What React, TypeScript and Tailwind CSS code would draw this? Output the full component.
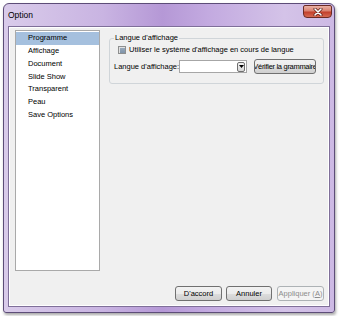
const items = ["Programme", "Affichage", "Document", "Slide Show", "Transparent", "Peau", "Save Options"];

function CloseButton() {
  return (
    <div className="mt-[1px] mr-[2px] w-[29px] h-[13px] rounded-b-[4px] rounded-t-[2px] border border-[#6a2b24] bg-[linear-gradient(to_bottom,#eab1a5,#d9806e_45%,#c2402c_55%,#d66a52)] flex items-center justify-center">
      <svg width="10" height="8" viewBox="0 0 10 8">
        <path d="M2 1 L8 7 M8 1 L2 7" stroke="#5a1d16" strokeWidth="3" strokeLinecap="round" />
        <path d="M2 1 L8 7 M8 1 L2 7" stroke="#ffffff" strokeWidth="1.6" strokeLinecap="round" />
      </svg>
    </div>
  );
}

function Button({ label, w, disabled }: { label: React.ReactNode; w: string; disabled?: boolean }) {
  return (
    <div
      className={
        disabled
          ? `${w} h-[15px] rounded-[3px] border border-[#adb2b5] bg-[#f4f4f4] text-[#8c8c8c] flex items-center justify-center whitespace-nowrap overflow-hidden`
          : `${w} h-[15px] rounded-[3px] border border-[#707070] bg-[linear-gradient(to_bottom,#f2f2f2,#ebebeb_50%,#dddddd_51%,#cfcfcf)] text-black flex items-center justify-center whitespace-nowrap overflow-hidden`
      }
    >
      {label}
    </div>
  );
}

export default function App() {
  return (
    <div className="w-[340px] h-[316px] bg-white pl-[3px] pt-[3px] font-['Liberation_Sans',Arial,sans-serif] text-[7.5px] leading-[10px] text-black">
      <div className="w-[332px] h-[310px] rounded-t-[6px] rounded-b-[3px] border border-[#5d4d78] bg-[linear-gradient(to_right,#d9cbea,#c9b4e2_30%,#b598d6_48%,#c3aae0_62%,#d4c3e8_85%,#cdb9e4)] shadow-[1px_2px_3px_rgba(0,0,0,0.35)] flex flex-col">
        <div className="h-[22px] flex items-start justify-between">
          <span className="pl-[4px] pt-[6px] text-[8.5px] leading-[10px] text-black">Option</span>
          <CloseButton />
        </div>
        <div className="mx-[4px] h-[281px] border border-[#7f6f99] bg-[#f0f0f0] flex flex-col shadow-[inset_0_0_0_1px_#ffffff]">
          <div className="flex pl-[6px] pt-[3px]">
            <div className="w-[85px] h-[241px] border border-[#a9a9a9] bg-white pt-[1px] flex flex-col">
              {items.map((t, i) => (
                <div
                  key={t}
                  className={
                    i === 0
                      ? "h-[12.75px] bg-[#a5c0de] pl-[12px] flex items-center"
                      : "h-[12.75px] pl-[12px] flex items-center"
                  }
                >
                  {t}
                </div>
              ))}
            </div>
            <fieldset className="ml-[9px] mt-[3px] w-[215px] h-[51px] rounded-[3px] border border-[#d0d5d9] pl-[4px]">
              <legend className="px-[1px] leading-[10px]">Langue d'affichage</legend>
              <div className="ml-[4px] mt-[2px] flex items-center h-[10px] whitespace-nowrap">
                <div className="w-[8px] h-[8px] border border-[#8e8f8f] bg-[#e2e2e2] flex items-center justify-center">
                  <div className="w-[5px] h-[5px] bg-[linear-gradient(to_bottom,#98a9bb,#7e93a9)]" />
                </div>
                <span className="ml-[3px]">Utiliser le système d'affichage en cours de langue</span>
              </div>
              <div className="mt-[4px] flex items-center h-[15px] whitespace-nowrap">
                <span className="w-[65px] shrink-0">Langue d'affichage:</span>
                <div className="w-[68px] h-[13px] shrink-0 border border-[#a6a6a6] bg-white flex justify-end items-center pr-[1px]">
                  <div className="w-[8px] h-[10px] rounded-[2px] border border-[#6f6f6f] bg-[linear-gradient(to_bottom,#f3f3f3,#d6d6d6)] flex items-center justify-center">
                    <svg width="5" height="3" viewBox="0 0 5 3">
                      <path d="M0 0 H5 L2.5 3 Z" fill="#000" />
                    </svg>
                  </div>
                </div>
                <div className="ml-[7px] shrink-0">
                  <Button w="w-[62px]" label={<span className="tracking-[-0.3px]">Vérifier la grammaire</span>} />
                </div>
              </div>
            </fieldset>
          </div>
          <div className="mt-auto mb-[5px] pr-[5px] flex justify-end">
            <Button w="w-[47px]" label="D'accord" />
            <div className="ml-[4px]">
              <Button w="w-[46px]" label="Annuler" />
            </div>
            <div className="ml-[5px]">
              <Button
                w="w-[47px]"
                disabled
                label={
                  <span>
                    Appliquer (<span className="underline">A</span>)
                  </span>
                }
              />
            </div>
          </div>
        </div>
      </div>
    </div>
  );
}
